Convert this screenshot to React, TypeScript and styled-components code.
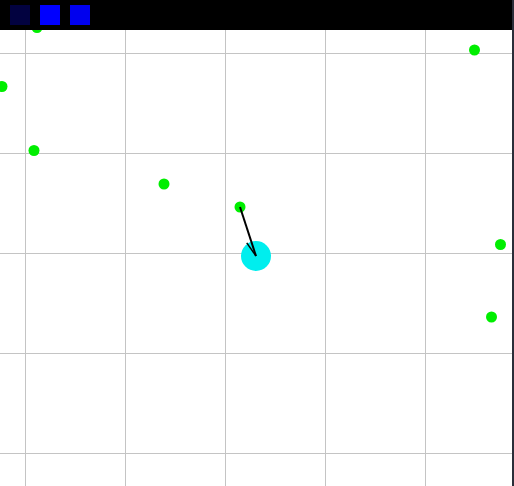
import React from 'react';
import styled, { createGlobalStyle } from 'styled-components';

const GlobalStyle = createGlobalStyle`
  html, body {
    margin: 0;
    padding: 0;
    background: #2b2e39;
    overflow: hidden;
    font-family: 'Liberation Sans', Arial, sans-serif;
  }
`;

const Stage = styled.div`
  display: flex;
  flex-direction: column;
  width: 512px;
  height: 486px;
  background: #ffffff;
`;

const Toolbar = styled.div`
  display: flex;
  align-items: center;
  gap: 10px;
  height: 30px;
  padding: 0 10px;
  background: #000000;
  flex-shrink: 0;
`;

const Swatch = styled.button<{ $color: string }>`
  width: 20px;
  height: 20px;
  padding: 0;
  border: none;
  background: ${(p) => p.$color};
  cursor: pointer;
`;

const Canvas = styled.svg`
  display: block;
  width: 512px;
  height: 456px;
`;

const dots: [number, number][] = [
  [37, 27.5],
  [474.5, 50],
  [2, 86.5],
  [34, 150.5],
  [164, 184],
  [500.5, 244.5],
  [491.5, 317],
];

const player = { x: 256, y: 256 };
const target = { x: 240, y: 207 };

const gridX = [25, 125, 225, 325, 425];
const gridY = [53, 153, 253, 353, 453];

// one barb of the heading arrow, drawn back from the tip
const barb = () => {
  const ang = Math.atan2(player.y - target.y, player.x - target.x);
  const a = ang + Math.PI - 0.3;
  return [player.x + Math.cos(a) * 16, player.y + Math.sin(a) * 16];
};

const App: React.FC = () => {
  const [bx, by] = barb();
  return (
    <>
      <GlobalStyle />
      <Stage>
        <Toolbar>
          <Swatch $color="#020240" />
          <Swatch $color="#0000ff" />
          <Swatch $color="#0000ee" />
        </Toolbar>
        <Canvas viewBox="0 30 512 456">
          {gridX.map((x) => (
            <line key={'x' + x} x1={x + 0.5} y1={0} x2={x + 0.5} y2={486} stroke="#c4c4c4" strokeWidth={1} />
          ))}
          {gridY.map((y) => (
            <line key={'y' + y} x1={0} y1={y + 0.5} x2={512} y2={y + 0.5} stroke="#c4c4c4" strokeWidth={1} />
          ))}
          <circle cx={player.x} cy={player.y} r={15} fill="#00eeee" />
          {dots.map(([x, y]) => (
            <circle key={x + '-' + y} cx={x} cy={y} r={5.5} fill="#00ee00" />
          ))}
          <circle cx={target.x} cy={target.y} r={5.5} fill="#00ee00" />
          <line x1={target.x} y1={target.y} x2={player.x} y2={player.y} stroke="#000" strokeWidth={2} />
          <line x1={player.x} y1={player.y} x2={bx} y2={by} stroke="#000" strokeWidth={1.5} />
        </Canvas>
      </Stage>
    </>
  );
};

export default App;
